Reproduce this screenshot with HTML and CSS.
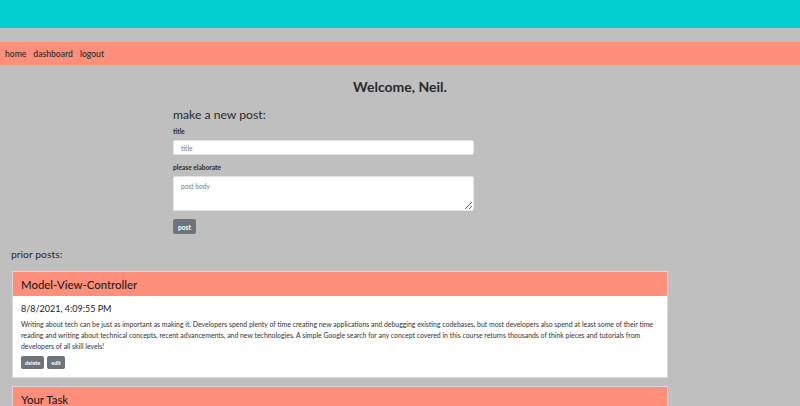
FILE: index.html
```html
<!DOCTYPE html>
<html>
<head>
<meta charset="utf-8">
<link rel="stylesheet" href="styles.css">
</head>
<body>
<header class="topbar"></header>
<nav class="nav">
  <a href="#">home</a>
  <a href="#">dashboard</a>
  <a href="#">logout</a>
</nav>
<h2 class="welcome">Welcome, Neil.</h2>
<section class="newpost">
  <h3 class="newpost-title">make a new post:</h3>
  <label class="lbl" for="t">title</label>
  <input id="t" class="field" type="text" placeholder="title">
  <label class="lbl lbl-2" for="b">please elaborate</label>
  <textarea id="b" class="field area" placeholder="post body"></textarea>
  <button class="btn btn-post">post</button>
</section>
<p class="prior">prior posts:</p>
<article class="card">
  <div class="card-head">Model-View-Controller</div>
  <div class="card-body">
    <div class="date">8/8/2021, 4:09:55 PM</div>
    <p class="text">Writing about tech can be just as important as making it. Developers spend plenty of time creating new applications and debugging existing codebases, but most developers also spend at least some of their time reading and writing about technical concepts, recent advancements, and new technologies. A simple Google search for any concept covered in this course returns thousands of think pieces and tutorials from developers of all skill levels!</p>
    <div class="actions">
      <button class="btn btn-sm">delete</button>
      <button class="btn btn-sm">edit</button>
    </div>
  </div>
</article>
<article class="card card-2">
  <div class="card-head">Your Task</div>
</article>
</body>
</html>
```
FILE: styles.css
```css
* { box-sizing: border-box; }
html, body { margin: 0; padding: 0; }
body {
  background: #bfbfbf;
  font-family: Lato, "Open Sans", sans-serif;
  color: #222;
  overflow: hidden;
  height: 406px;
}
.topbar {
  height: 28px;
  background: #03cfd0;
}
.nav {
  margin-top: 14px;
  height: 23px;
  background: #ff8f7a;
  display: flex;
  align-items: center;
  gap: 7px;
  padding: 0 5px;
  font-size: 8.6px;
  font-weight: 500;
}
.nav a { color: #2a2a2a; text-decoration: none; }
.welcome {
  margin: 12px 0 0;
  text-align: center;
  font-size: 14px;
  line-height: 20px;
  font-weight: 700;
  color: #2a2a2a;
}
.newpost {
  margin: 10px 0 0 173px;
  width: 301px;
  display: flex;
  flex-direction: column;
}
.newpost-title {
  margin: 0;
  font-size: 12.2px;
  line-height: 16px;
  font-weight: 400;
  color: #2a2a2a;
}
.lbl {
  margin-top: 3px;
  font-size: 6.6px;
  line-height: 10px;
  font-weight: 700;
  color: #2a2a2a;
}
.lbl-2 { margin-top: 7px; }
.field {
  margin-top: 4px;
  height: 15px;
  border: 1px solid #e4e4e4;
  border-radius: 2px;
  background: #fff;
  padding: 0 7px;
  font-family: inherit;
  font-size: 6.6px;
  color: #333;
  outline: none;
}
.field::placeholder { color: #7a7a7a; }
.area {
  height: 35px;
  padding: 5px 7px;
  resize: vertical;
}
.btn {
  border: none;
  background: #6c757d;
  color: #fff;
  font-family: inherit;
  border-radius: 2px;
  padding: 0;
  cursor: pointer;
}
.btn-post {
  margin-top: 8px;
  width: 23px;
  height: 15px;
  font-size: 6.6px;
  font-weight: 700;
}
.prior {
  margin: 13px 0 0 11px;
  font-size: 10.4px;
  line-height: 14px;
  color: #2a2a2a;
}
.card {
  margin: 10px 0 0 12px;
  width: 656px;
  border: 1px solid #d9d9d9;
  background: #fff;
}
.card-2 { margin-top: 8px; }
.card-head {
  height: 24px;
  background: #ff8f7a;
  display: flex;
  align-items: center;
  padding: 0 8px;
  font-size: 11.4px;
  font-weight: 500;
  color: #1e1e1e;
}
.card-body {
  padding: 7px 8px 8px;
}
.date {
  font-size: 9px;
  line-height: 12px;
  color: #222;
}
.text {
  margin: 4px 0 0;
  font-size: 6.9px;
  line-height: 11px;
  color: #333;
}
.actions {
  margin-top: 4px;
  display: flex;
  gap: 3px;
}
.btn-sm {
  height: 13px;
  padding: 0 4px;
  font-size: 5.5px;
  font-weight: 700;
}
```
